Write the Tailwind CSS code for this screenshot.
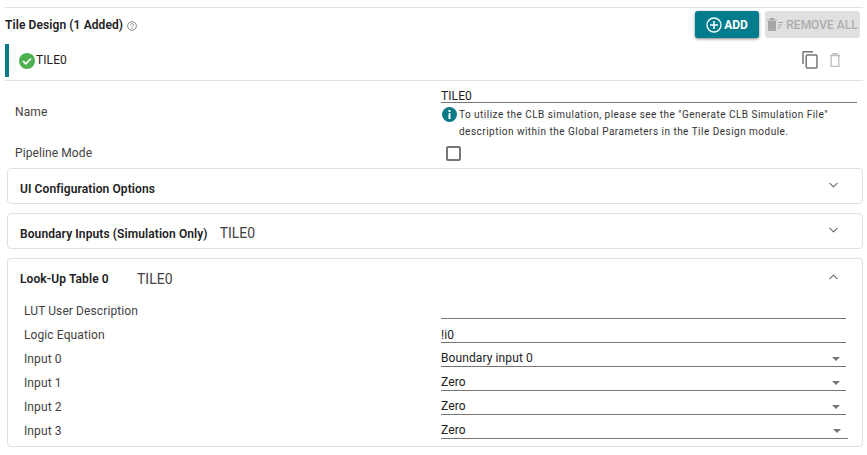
<!DOCTYPE html>
<html lang="en">
<head>
<meta charset="UTF-8" />
<meta name="viewport" content="width=device-width, initial-scale=1.0" />
<title>Tile Design</title>
<script src="https://cdn.jsdelivr.net/npm/@tailwindcss/browser@4"></script>
</head>
<body class="bg-white font-['Roboto',sans-serif] text-[#333] overflow-hidden">
<div class="w-[867px] h-[455px] pt-[7px] pl-[5px] pr-[4px]">

  <!-- header -->
  <div class="border-t border-[#e0e0e0] h-[37px] flex items-start justify-between pr-[3px]">
    <div class="flex items-center gap-[4px] mt-[8px] h-[18px] text-[12px] font-semibold tracking-[0.1px] text-[#212121]">
      <span>Tile Design (1 Added)</span>
      <svg class="w-[10px] h-[10px] mt-[1px]" viewBox="0 0 24 24" fill="none" stroke="#757575" stroke-width="2"><circle cx="12" cy="12" r="10.500"/><path d="M8.500 9.500a3.500 3.500 0 1 1 5.300 3c-1.200.7-1.800 1.300-1.800 2.500M12 16.500v2.500"/></svg>
    </div>
    <div class="flex gap-[6px] mt-[3px]">
      <button class="w-[64px] h-[27px] rounded-[3px] bg-[#007c8c] shadow-[0_1px_3px_rgba(0,0,0,0.5)] text-white text-[12px] font-bold flex items-center justify-center gap-[2px]">
        <svg class="w-[16px] h-[16px]" viewBox="0 0 16 16" fill="none" stroke="white" stroke-width="1.300"><circle cx="8" cy="8" r="7"/><path d="M8 4v8M4 8h8" stroke-width="1.500"/></svg>
        ADD
      </button>
      <button class="w-[95px] h-[27px] rounded-[3px] bg-[#e0e0e0] text-[#adadad] text-[12px] font-medium flex items-center justify-center gap-[3px]">
        <svg class="w-[16px] h-[13px]" viewBox="0 0 16 13" fill="#a6a6a6"><path d="M0 1.500h10v1H0zM3 0h4v1.500H3zM1 3h8v9a1 1 0 0 1-1 1H2a1 1 0 0 1-1-1zM11 4h5v1h-5zM11 6.500h4v1h-4zM11 9h2.500v1H11z"/></svg>
        REMOVE ALL
      </button>
    </div>
  </div>

  <!-- selected tile -->
  <div class="h-[37px] border-b border-[#e0e0e0] pb-[3px]">
    <div class="h-[33px] border-l-4 border-[#0b7a87] flex items-center justify-between pl-[10px] pr-[23px]">
      <div class="flex items-center gap-[1px] text-[12px] tracking-[0.1px] text-[#212121]">
        <svg class="w-[16px] h-[16px]" viewBox="0 0 16 16"><circle cx="8" cy="8" r="8" fill="#4caf50"/><path d="M4 8.200l2.800 2.600L12 5.500" fill="none" stroke="white" stroke-width="1.700"/></svg>
        <span class="mb-[2px]">TILE0</span>
      </div>
      <div class="flex items-center gap-[12px] mb-[2px]">
        <svg class="w-[16px] h-[18px]" viewBox="0 0 16 18" fill="none" stroke="#757575" stroke-width="1.500"><path d="M1 13V1.500A.8.8 0 0 1 1.800.800H11"/><rect x="4.200" y="4" width="10.800" height="13" rx="1"/></svg>
        <svg class="w-[10px] h-[14px]" viewBox="0 0 10 14" fill="none" stroke="#bdbdbd" stroke-width="1.300"><path d="M0 2.500h10M3 2.500V.700h4v1.800M1.200 2.500v10.800h7.600V2.500"/></svg>
      </div>
    </div>
  </div>

  <!-- name + pipeline -->
  <div class="flex text-[12px] tracking-[0.1px] text-[#424242] pl-[10px] h-[87px]">
    <div class="w-[426px]">
      <div class="h-[60px] pt-[24px] leading-[14px]">Name</div>
      <div class="mt-[5px] leading-[14px]">Pipeline Mode</div>
    </div>
    <div class="w-[416px] pt-[7px]">
      <div class="border-b border-[#757575] h-[15px] leading-[17px] text-[12px] text-[#212121]">TILE0</div>
      <div class="flex gap-[2px] mt-[3px]">
        <svg class="w-[15px] h-[15px] ml-[1px] mt-[1px] shrink-0" viewBox="0 0 15 15"><circle cx="7.500" cy="7.500" r="7.500" fill="#0b7a87"/><path d="M6.500 3h2v2h-2zM6.500 6.200h2V12h-2z" fill="white"/></svg>
        <p class="text-[10px] leading-[17px] tracking-[0.48px] text-[#333]">To utilize the CLB simulation, please see the "Generate CLB Simulation File"<br>description within the Global Parameters in the Tile Design module.</p>
      </div>
      <div class="w-[15px] h-[15px] border-2 border-[#757575] rounded-[2px] ml-[5px] mt-[6px]"></div>
    </div>
  </div>

  <!-- collapsed cards -->
  <div class="ml-[2px] w-[856px] flex flex-col gap-[9px]">
    <div class="h-[36px] border border-[#e0e0e0] rounded-[4px] flex items-center justify-between pl-[12px] pr-[24px] text-[12px] font-semibold tracking-[0.1px] text-[#212121]">
      <span class="mt-[5px]">UI Configuration Options</span>
      <svg class="w-[9px] h-[6px] mb-[2px]" viewBox="0 0 9 6" fill="none" stroke="#757575" stroke-width="1.200"><path d="M.5.800l4 4 4-4"/></svg>
    </div>
    <div class="h-[36px] border border-[#e0e0e0] rounded-[4px] flex items-center justify-between pl-[12px] pr-[24px]">
      <span class="flex items-center gap-[12px] mt-[5px]"><span class="text-[12px] font-semibold tracking-[0.1px] text-[#212121]">Boundary Inputs (Simulation Only)</span><span class="text-[14px] text-[#424242]">TILE0</span></span>
      <svg class="w-[9px] h-[6px] mb-[2px]" viewBox="0 0 9 6" fill="none" stroke="#757575" stroke-width="1.200"><path d="M.5.800l4 4 4-4"/></svg>
    </div>

    <!-- expanded LUT card -->
    <div class="h-[189px] border border-[#e0e0e0] rounded-[4px]">
      <div class="h-[40px] flex items-center justify-between pl-[12px] pr-[24px]">
        <span class="flex items-center"><span class="w-[117px] text-[12px] font-semibold tracking-[0.1px] text-[#212121]">Look-Up Table 0</span><span class="text-[14px] text-[#424242]">TILE0</span></span>
        <svg class="w-[9px] h-[6px] mb-[5px]" viewBox="0 0 9 6" fill="none" stroke="#757575" stroke-width="1.200"><path d="M.5 5.200l4-4 4 4"/></svg>
      </div>
      <div class="flex flex-col pl-[16px] text-[12px] tracking-[0.1px] text-[#424242]">
        <div class="flex h-[24px]"><span class="w-[417px] pt-[3px]">LUT User Description</span><span class="w-[405px] border-b border-[#757575] h-[20px]"></span></div>
        <div class="flex h-[24px]"><span class="w-[417px] pt-[3px]">Logic Equation</span><span class="w-[405px] border-b border-[#757575] h-[20px] pt-[5px] leading-[15px] text-[#212121]">!i0</span></div>
        <div class="flex h-[24px]"><span class="w-[417px] pt-[3px]">Input 0</span><span class="w-[405px] border-b border-[#757575] h-[20px] pt-[4px] leading-[15px] text-[#212121] flex justify-between items-center pr-[6px]">Boundary input 0<i class="border-x-[4px] border-x-transparent border-t-[4px] border-t-[#757575]"></i></span></div>
        <div class="flex h-[24px]"><span class="w-[417px] pt-[3px]">Input 1</span><span class="w-[405px] border-b border-[#757575] h-[20px] pt-[4px] leading-[15px] text-[#212121] flex justify-between items-center pr-[6px]">Zero<i class="border-x-[4px] border-x-transparent border-t-[4px] border-t-[#757575]"></i></span></div>
        <div class="flex h-[24px]"><span class="w-[417px] pt-[3px]">Input 2</span><span class="w-[405px] border-b border-[#757575] h-[20px] pt-[4px] leading-[15px] text-[#212121] flex justify-between items-center pr-[6px]">Zero<i class="border-x-[4px] border-x-transparent border-t-[4px] border-t-[#757575]"></i></span></div>
        <div class="flex h-[24px]"><span class="w-[417px] pt-[3px]">Input 3</span><span class="w-[407px] border-b border-[#757575] h-[20px] pt-[4px] leading-[15px] text-[#212121] flex justify-between items-center pr-[7px]">Zero<i class="border-x-[4px] border-x-transparent border-t-[4px] border-t-[#757575]"></i></span></div>
      </div>
    </div>
  </div>
</div>
</body>
</html>
